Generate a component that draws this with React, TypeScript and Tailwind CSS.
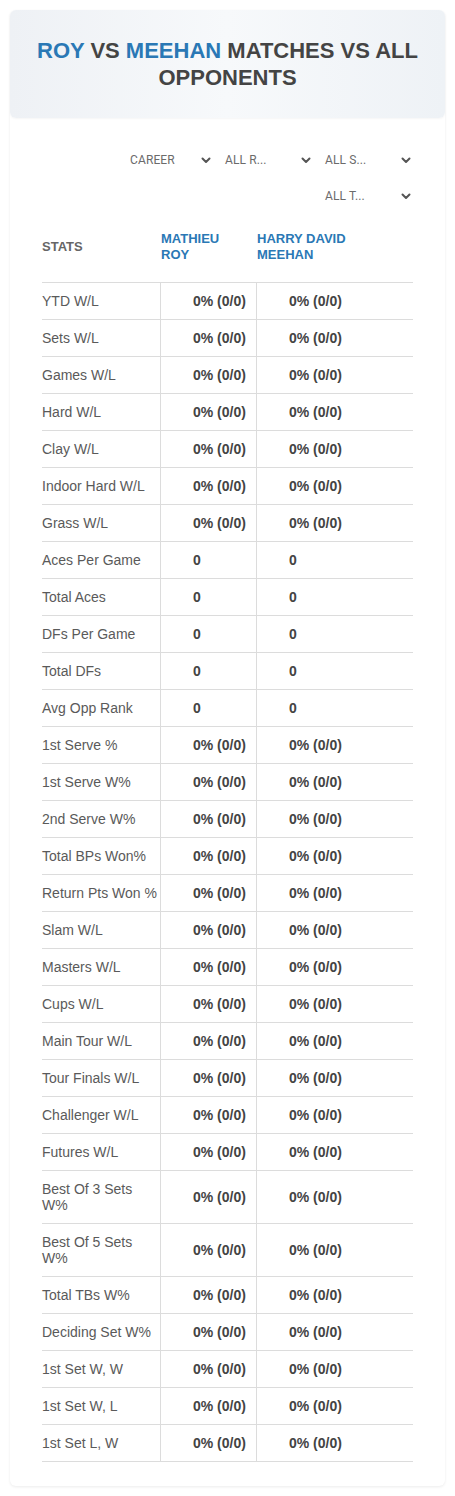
import React from "react";

const rows: [string, string][] = [
  ["YTD W/L", "0% (0/0)"],
  ["Sets W/L", "0% (0/0)"],
  ["Games W/L", "0% (0/0)"],
  ["Hard W/L", "0% (0/0)"],
  ["Clay W/L", "0% (0/0)"],
  ["Indoor Hard W/L", "0% (0/0)"],
  ["Grass W/L", "0% (0/0)"],
  ["Aces Per Game", "0"],
  ["Total Aces", "0"],
  ["DFs Per Game", "0"],
  ["Total DFs", "0"],
  ["Avg Opp Rank", "0"],
  ["1st Serve %", "0% (0/0)"],
  ["1st Serve W%", "0% (0/0)"],
  ["2nd Serve W%", "0% (0/0)"],
  ["Total BPs Won%", "0% (0/0)"],
  ["Return Pts Won %", "0% (0/0)"],
  ["Slam W/L", "0% (0/0)"],
  ["Masters W/L", "0% (0/0)"],
  ["Cups W/L", "0% (0/0)"],
  ["Main Tour W/L", "0% (0/0)"],
  ["Tour Finals W/L", "0% (0/0)"],
  ["Challenger W/L", "0% (0/0)"],
  ["Futures W/L", "0% (0/0)"],
  ["Best Of 3 Sets W%", "0% (0/0)"],
  ["Best Of 5 Sets W%", "0% (0/0)"],
  ["Total TBs W%", "0% (0/0)"],
  ["Deciding Set W%", "0% (0/0)"],
  ["1st Set W, W", "0% (0/0)"],
  ["1st Set W, L", "0% (0/0)"],
  ["1st Set L, W", "0% (0/0)"],
];

function Chevron() {
  return (
    <svg width="10" height="7" viewBox="0 0 10 7" className="shrink-0">
      <path d="M1.5 1.5 L5 5 L8.5 1.5" fill="none" stroke="#555" strokeWidth="2" strokeLinecap="round" strokeLinejoin="round" />
    </svg>
  );
}

function Select({ label, first }: { label: string; first?: boolean }) {
  return (
    <div className={`flex h-[28px] w-[100px] items-center justify-between pr-[9px] ${first ? "pl-[10px]" : "pl-[5px]"}`}>
      <span className="text-[12px] tracking-[0.01em] text-[#6b6b6b]" style={{ fontFamily: "Roboto, 'Noto Sans', sans-serif" }}>
        {label}
      </span>
      <Chevron />
    </div>
  );
}

export default function App() {
  return (
    <div className="min-h-[1496px] bg-white pt-[10px]" style={{ fontFamily: "'Liberation Sans', Arial, sans-serif" }}>
      <div className="mx-[10px] rounded-[6px] bg-white pb-[24px] shadow-[0_1px_3px_rgba(0,0,0,0.08)]">
        <div className="flex h-[108px] items-center justify-center rounded-[6px] bg-gradient-to-r from-[#eef1f5] via-[#f7f9fb] to-[#eef2f6] px-[16px] shadow-[0_1px_2px_rgba(0,0,0,0.04)]">
          <h1 className="text-center text-[22px] font-bold leading-[27px] text-[#444]">
            <span className="text-[#2a78b5]">ROY</span> VS <span className="text-[#2a78b5]">MEEHAN</span> MATCHES VS ALL OPPONENTS
          </h1>
        </div>

        <div className="mt-[28px] flex flex-col items-end gap-[8px] pr-[25px]">
          <div className="flex">
            <Select label="CAREER" first />
            <Select label="ALL R..." />
            <Select label="ALL S..." />
          </div>
          <div className="flex">
            <Select label="ALL T..." />
          </div>
        </div>

        <div className="mx-[32px] mt-[11px]">
          <div className="grid h-[62px] grid-cols-[118px_96px_1fr] border-b border-[#dcdcdc] pt-[10px] pb-[20px]">
            <div className="flex items-center text-[13px] font-bold text-[#666]">STATS</div>
            <div className="flex items-center pl-[1px] text-[13px] font-bold leading-[16px] text-[#2a78b5]">
              MATHIEU<br />ROY
            </div>
            <div className="flex items-center pl-[1px] text-[13px] font-bold leading-[16px] text-[#2a78b5]">
              HARRY DAVID<br />MEEHAN
            </div>
          </div>
          {rows.map(([label, val]) => {
            const two = label.startsWith("Best Of");
            return (
              <div
                key={label}
                className={`grid grid-cols-[118px_96px_1fr] border-b border-[#dcdcdc] ${two ? "h-[53px]" : "h-[37px]"}`}
              >
                <div className={`flex items-center text-[14px] leading-[16px] text-[#5a5a5a] ${two ? "pr-[20px]" : ""}`}>{label}</div>
                <div className="flex items-center border-l border-[#dcdcdc] pl-[32px] text-[14px] font-bold text-[#444]">{val}</div>
                <div className="flex items-center border-l border-[#dcdcdc] pl-[32px] text-[14px] font-bold text-[#444]">{val}</div>
              </div>
            );
          })}
        </div>
      </div>
    </div>
  );
}
